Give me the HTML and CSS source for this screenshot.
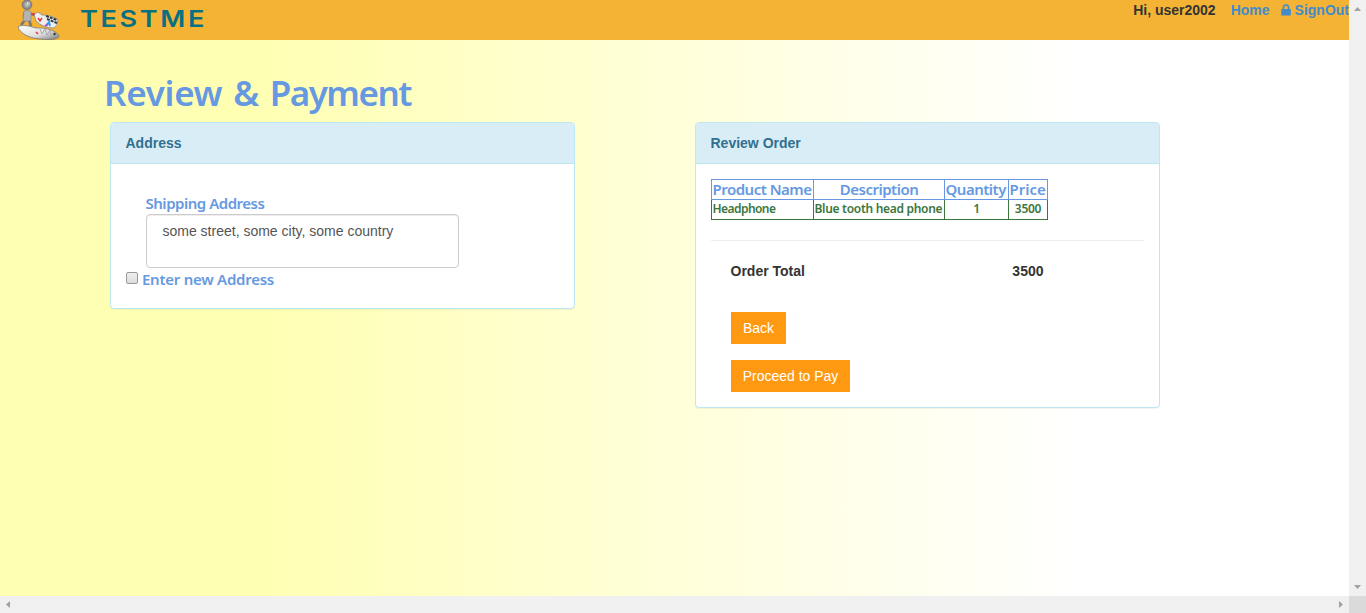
FILE: index.html
```html
<!DOCTYPE html>
<html lang="en">
<head>
<meta charset="utf-8">
<title>Review &amp; Payment</title>
<link rel="stylesheet" href="styles.css">
</head>
<body>
<div class="window">
  <div class="page">
    <header class="topbar">
      <svg class="mascot" width="46" height="40" viewBox="0 0 46 40">
        <defs>
          <linearGradient id="metal" x1="0" y1="0" x2="1" y2="1"><stop offset="0" stop-color="#fff"/><stop offset=".6" stop-color="#ddd"/><stop offset="1" stop-color="#777"/></linearGradient>
          <radialGradient id="head"><stop offset="0" stop-color="#ccc"/><stop offset="1" stop-color="#777"/></radialGradient>
        </defs>
        <path d="M2 27C6 24 13 26 20 28C31 27 42 32 43 36C42 40 33 40 24 39C12 38 4 33 2 27Z" fill="url(#metal)" stroke="#777" stroke-width=".8"/>
        <path d="M9 12Q7 16 9 20L5 25M13 20L15 26M15 14L19 15" stroke="#777" stroke-width="2.6" fill="none"/>
        <path d="M8 11Q12 9 15 12L15 21L7 21Z" fill="#b4b4b4" stroke="#888" stroke-width=".7"/>
        <circle cx="11" cy="4.7" r="5" fill="url(#head)" stroke="#777" stroke-width=".6"/>
        <circle cx="12.5" cy="3.3" r="1.3" fill="#eee"/><circle cx="12.8" cy="3.3" r=".5" fill="#333"/>
        <path d="M18 14L22 12L26 15Q36 15 42 20Q42 25 38 28Q27 28 20 21Z" fill="#eee" stroke="#888" stroke-width=".8"/>
        <path d="M30 16L41 20M31 19L41 23" stroke="#333b44" stroke-width="2" stroke-dasharray="3 1"/>
        <path d="M16 14L19 14M22 18L24 21L26 18M20 32L22 34" stroke="#e33" stroke-width="1.5" fill="none"/>
        <path d="M30 26L33 22L34 26" stroke="#289fff" stroke-width="2" fill="none"/>
        <path d="M29 26L32 24" stroke="#b34cd0" stroke-width="1.8"/>
        <path d="M24 29L26 34L29 29L31 35L34 30L35 35" stroke="#aaa" fill="none"/>
        <circle cx="38.5" cy="34" r="1.2" fill="#333"/>
      </svg>
      <div class="wordmark">TESTME</div>
      <nav class="account">
        <span>Hi, user2002</span>
        <a class="home">Home</a>
        <a class="signout"><svg width="10" height="12" viewBox="0 0 10 12"><path d="M2.4 6V3.6A2.6 2.6 0 0 1 7.6 3.6V6" fill="none" stroke="#428bca" stroke-width="1.6"/><rect x=".2" y="5" width="9.6" height="6.5" rx=".6" fill="#428bca"/></svg>SignOut</a>
      </nav>
    </header>
    <main class="content">
      <h1>Review &amp; <span class="tight">Payment</span></h1>
      <div class="panels">
        <section class="panel">
          <h2 class="heading">Address</h2>
          <div class="address">
            <label class="label shipping">Shipping Address</label>
            <div class="field">some street, some city, some country</div>
            <div class="check"><span class="box"></span><span class="label enter">Enter new Address</span></div>
          </div>
        </section>
        <section class="panel">
          <h2 class="heading">Review Order</h2>
          <div class="order">
            <table>
              <colgroup><col class="c1"><col class="c2"><col class="c3"><col class="c4"></colgroup>
              <tr class="th"><th class="left">Product Name</th><th>Description</th><th class="left">Quantity</th><th class="left price">Price</th></tr>
              <tr class="td"><td class="left name">Headphone</td><td class="left">Blue tooth head phone</td><td>1</td><td>3500</td></tr>
            </table>
            <div class="rule"></div>
            <div class="total"><span>Order Total</span><span>3500</span></div>
            <div class="actions"><a class="btn back">Back</a><a class="btn pay">Proceed to Pay</a></div>
          </div>
        </section>
      </div>
    </main>
  </div>
  <div class="vbar"><svg width="7" height="4"><path d="M0 4L3.5 0L7 4Z"/></svg><svg width="7" height="4"><path d="M0 0H7L3.5 4Z"/></svg></div>
  <div class="hbar"><svg width="4" height="7"><path d="M4 0V7L0 3.5Z"/></svg><svg width="4" height="7"><path d="M0 0V7L4 3.5Z"/></svg></div>
  <div class="corner"></div>
</div>
</body>
</html>
```
FILE: styles.css
```css
* { box-sizing: border-box; }
body { margin: 0; overflow: hidden; font: 14px/20px "Liberation Sans", Arial, sans-serif; color: #333; }
.window { display: grid; grid-template: 596px 17px / 1349px 17px; }
.page { background: linear-gradient(to right, #ffffb3 19%, #fff 80%); overflow: hidden; }
.topbar { height: 40px; background: #f5b335; display: flex; align-items: flex-start; padding-left: 16px; }
.mascot { flex: none; }
.wordmark { margin: 4px 0 0 18px; font: 600 23px/30px Inter, sans-serif; letter-spacing: 2.2px; color: #087080; transform: scaleX(1.18); transform-origin: 0 0; }
.account { display: flex; margin-left: auto; font-weight: bold; white-space: nowrap; }
.account a { color: #428bca; }
.home { margin-left: 15px; }
.signout { display: flex; align-items: center; gap: 4px; margin-left: 11px; }
.content { padding: 33px 0 0 104px; }
h1 { margin: 0; font: 600 35px/40px "Noto Sans", sans-serif; color: #6699e1; letter-spacing: -.3px; word-spacing: 2px; white-space: nowrap; height: 49px; }
.tight { letter-spacing: -1.5px; }
.panels { display: flex; align-items: flex-start; gap: 120px; padding-left: 6px; }
.panel { width: 465px; background: #fff; border: 1px solid #bce8f1; border-radius: 4px; box-shadow: 0 1px 1px rgba(0,0,0,.05); }
.heading { margin: 0; font: bold 14px/20px "Liberation Sans", Arial, sans-serif; height: 41px; padding: 10px 14.5px; color: #31708f; background: #d9edf7; border-bottom: 1px solid #bce8f1; border-radius: 3px 3px 0 0; }
.address { height: 144px; padding: 29px 15px 0; }
.label { font: 600 15px/20px "Noto Sans", sans-serif; color: #6699e1; white-space: nowrap; }
.shipping { display: block; margin: 0 0 1px 19.5px; letter-spacing: -.48px; }
.field { width: 313px; height: 54px; margin-left: 20px; padding: 6px 15.5px; color: #555; border: 1px solid #ccc; border-radius: 4px; box-shadow: inset 0 1px 1px rgba(0,0,0,.075); }
.check { display: flex; margin-top: 1px; }
.box { width: 12px; height: 12px; margin: 3px 4px 0 0; border: 1px solid #999; border-radius: 2px; background: linear-gradient(#eee, #ddd); }
.enter { letter-spacing: -.25px; }
.order { height: 243px; padding: 15px 15px 0; }
table { width: 337px; table-layout: fixed; border-collapse: collapse; font-family: "Noto Sans", sans-serif; font-weight: 600; text-align: center; white-space: nowrap; }
.c1 { width: 102px; } .c2 { width: 131px; } .c3 { width: 64px; } .c4 { width: 39px; }
th, td { height: 20px; padding: 0 .5px; border: 1px solid #3c763d; }
th { font-size: 15px; line-height: 19px; font-weight: 600; color: #6699e1; border-color: #6699e1; letter-spacing: -.5px; }
.price { letter-spacing: 0; }
td { font-size: 12px; line-height: 18px; padding-bottom: 1px; color: #3c763d; letter-spacing: -.3px; }
.name { letter-spacing: -.55px; }
.left { text-align: left; }
.rule { height: 1px; margin-top: 20px; background: #eee; }
.total { display: flex; justify-content: space-between; width: 313px; margin: 20px 0 0 19.5px; font-weight: bold; }
.actions { display: flex; flex-direction: column; align-items: flex-start; gap: 16px; margin: 31px 0 0 20px; }
.btn { height: 32px; padding: 6px 0; text-align: center; color: #fff; background: #ff9912; }
.back { width: 55px; } .pay { width: 119px; }
.vbar, .hbar { display: flex; justify-content: space-between; align-items: center; background: #f0f0f0; fill: #a0a0a0; }
.vbar { flex-direction: column; padding: 7px 0; }
.hbar { padding: 0 6px; }
.corner { background: #dadada; }
```
